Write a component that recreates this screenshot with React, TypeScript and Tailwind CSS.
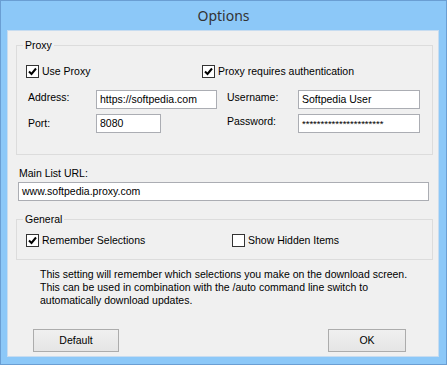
import React from 'react';

function Check({ checked }: { checked: boolean }) {
  return (
    <span className="flex h-[13px] w-[13px] flex-none items-center justify-center border border-[#333] bg-white">
      {checked && (
        <svg width="9" height="9" viewBox="0 0 9 9">
          <path d="M1 4.5 L3.5 7 L8 1.5" fill="none" stroke="#000" strokeWidth="2" />
        </svg>
      )}
    </span>
  );
}

function CheckItem({ checked, label }: { checked: boolean; label: string }) {
  return (
    <div className="flex items-center gap-[3px]">
      <Check checked={checked} />
      <span className="leading-[13px]">{label}</span>
    </div>
  );
}

function Field({ value, w, className = '' }: { value: string; w: string; className?: string }) {
  return (
    <div className={`flex h-[19px] items-center border border-[#abadb3] bg-white pl-[3px] ${w} ${className}`}>
      <span className="leading-[13px]">{value}</span>
    </div>
  );
}

function Group({ title, className = '', children }: { title: string; className?: string; children: React.ReactNode }) {
  return (
    <div className={`relative border border-[#dcdcdc] ${className}`}>
      <span className="absolute -top-[7px] left-[6px] bg-[#f0f0f0] px-[2px] leading-[13px]">{title}</span>
      {children}
    </div>
  );
}

export default function App() {
  return (
    <div className="flex h-[365px] w-[447px] flex-col border border-[#6a9ed3] bg-[#8cc8f8] font-['Liberation_Sans',Arial,sans-serif] text-[10.5px] text-black">
      <div className="flex h-[29px] flex-none items-center justify-center font-['Noto_Sans',sans-serif] text-[14px] text-[#333]">
        Options
      </div>
      <div className="ml-[6px] mr-[7px] flex h-[327px] flex-col border border-[#c7dcf0] bg-[#f0f0f0]">
        <Group title="Proxy" className="ml-[8px] mt-[14px] h-[110px] w-[417px]">
          <div className="ml-[9px] mt-[19px] flex">
            <div className="w-[176px]">
              <CheckItem checked label="Use Proxy" />
            </div>
            <CheckItem checked label="Proxy requires authentication" />
          </div>
          <div className="mt-[12px] flex items-start">
            <span className="ml-[11px] mt-[1px] w-[68px] leading-[13px]">Address:</span>
            <Field value="https://softpedia.com" w="w-[121px]" />
            <span className="ml-[10px] mt-[1px] w-[71px] leading-[13px]">Username:</span>
            <Field value="Softpedia User" w="w-[122px]" />
          </div>
          <div className="mt-[5px] flex items-start">
            <span className="ml-[11px] mt-[3px] w-[68px] leading-[13px]">Port:</span>
            <Field value="8080" w="w-[65px]" />
            <span className="ml-[66px] mt-[1px] w-[71px] leading-[13px]">Password:</span>
            <Field value="**********************" w="w-[122px]" className="text-[9.5px]" />
          </div>
        </Group>

        <span className="ml-[11px] mt-[12px] leading-[13px]">Main List URL:</span>
        <Field value="www.softpedia.proxy.com" w="w-[411px]" className="ml-[10px] mt-[2px]" />

        <Group title="General" className="ml-[8px] mt-[18px] h-[41px] w-[417px]">
          <div className="ml-[9px] mt-[14px] flex">
            <div className="w-[206px]">
              <CheckItem checked label="Remember Selections" />
            </div>
            <CheckItem checked={false} label="Show Hidden Items" />
          </div>
        </Group>

        <p className="ml-[32px] mt-[8px] whitespace-nowrap leading-[13px]">
          This setting will remember which selections you make on the download screen.
          <br />
          This can be used in combination with the /auto command line switch to
          <br />
          automatically download updates.
        </p>

        <div className="mt-auto mb-[4px] flex justify-between px-[25px]">
          <button className="h-[23px] w-[86px] border border-[#acacac] bg-gradient-to-b from-[#f0f0f0] to-[#e5e5e5] leading-[13px]">
            Default
          </button>
          <button className="mr-[7px] h-[23px] w-[78px] border border-[#acacac] bg-gradient-to-b from-[#f0f0f0] to-[#e5e5e5] leading-[13px]">
            OK
          </button>
        </div>
      </div>
    </div>
  );
}
